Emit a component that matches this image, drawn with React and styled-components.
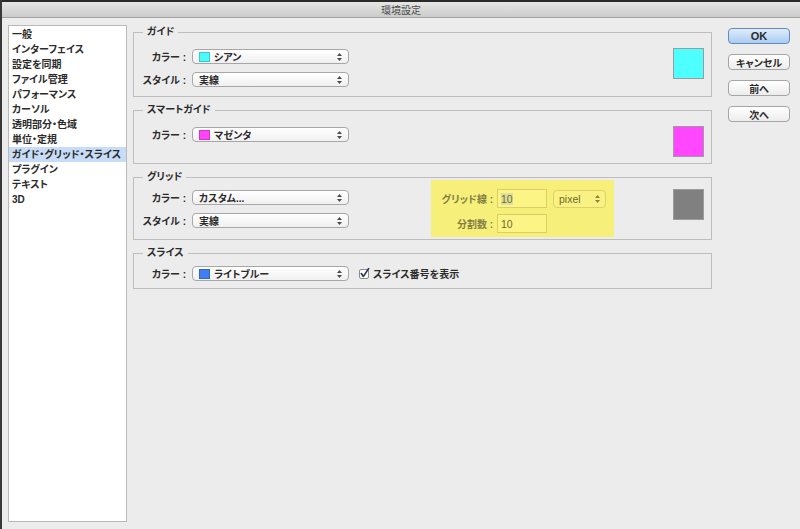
import React from "react";
import styled, { createGlobalStyle, css } from "styled-components";

const FONT = `"Liberation Sans", "Noto Sans CJK JP", sans-serif`;

const GlobalStyle = createGlobalStyle`
  html, body { margin: 0; padding: 0; background: #ececec; }
  body {
    font-family: ${FONT};
    font-size: 10px;
    color: #222;
    font-feature-settings: "palt";
  }
  * { box-sizing: border-box; }
`;

const Window = styled.div`
  width: 800px;
  height: 529px;
  border-left: 2px solid #383838;
  display: flex;
  flex-direction: column;
  overflow: hidden;
  background: #ececec;
`;

const TitleBar = styled.div`
  height: 18px;
  border-top: 2px solid #2a2a2a;
  border-bottom: 1px solid #a2a2a2;
  background: linear-gradient(#e6e6e6, #cbcbcb);
  display: flex;
  align-items: center;
  justify-content: center;
  font-size: 10px;
  color: #4b4b4b;
`;

const Body = styled.div`
  display: flex;
  align-items: flex-start;
  padding: 7px 0 0 6px;
`;

const Sidebar = styled.ul`
  list-style: none;
  margin: 0;
  padding: 1px 0 0;
  width: 119px;
  height: 497px;
  background: #fff;
  border: 1px solid #b9b9b9;
`;

const SideItem = styled.li`
  height: 15px;
  line-height: 15px;
  padding-left: 3px;
  font-weight: 700;
  color: #2b2b2b;
  white-space: nowrap;
  background: ${(p) => (p.$selected ? "#c6dcf7" : "transparent")};
`;

const Main = styled.div`
  margin-left: 6px;
  width: 579px;
  padding-top: 1px;
  display: flex;
  flex-direction: column;
  gap: 7px;
`;

const Group = styled.fieldset`
  margin: 0;
  min-width: 0;
  border: 1px solid #bdbdbd;
  padding: ${(p) => p.$pt}px 7px ${(p) => p.$pb}px 0;
`;

const Legend = styled.legend`
  font-size: 10px;
  line-height: 12px;
  padding: 0 4px;
  margin-left: 9px;
  font-weight: 700;
  color: #2b2b2b;
`;

const GroupContent = styled.div`
  display: flex;
  align-items: flex-start;
`;

const Rows = styled.div`
  display: flex;
  flex-direction: column;
  gap: 6px;
  margin-top: ${(p) => p.$mt || 0}px;
`;

const Row = styled.div`
  display: flex;
  align-items: center;
  height: 17px;
`;

const Label = styled.span`
  width: 52px;
  margin-right: 6px;
  text-align: right;
  white-space: nowrap;
  font-weight: 700;
  color: #2b2b2b;
`;

const SelectBox = styled.div`
  width: ${(p) => p.$w || 157}px;
  height: 15px;
  border: 1px solid #a7a7a7;
  border-radius: 4px;
  background: linear-gradient(#ffffff, #f0f0f0);
  display: flex;
  align-items: center;
  padding: 0 6px;
  font-weight: 700;
  color: #2b2b2b;
  white-space: nowrap;
`;

const SelectText = styled.span`
  flex: 1;
`;

const Chip = styled.span`
  width: 11px;
  height: 10px;
  margin-right: 4px;
  background: ${(p) => p.$color};
  border: 1px solid rgba(0, 0, 0, 0.2);
`;

const Swatch = styled.div`
  width: 31px;
  height: 31px;
  margin-left: auto;
  margin-top: ${(p) => p.$mt || 0}px;
  background: ${(p) => p.$color};
  border: 1px solid #9c9c9c;
`;

const Highlight = styled.div`
  margin-left: 82px;
  margin-top: -3px;
  background: #f6ef7a;
  padding: 9px 8px 4px 0;
  display: flex;
  flex-direction: column;
  gap: 6px;
`;

const HRow = styled.div`
  display: flex;
  align-items: center;
  height: 19px;
`;

const HLabel = styled.span`
  width: 62px;
  margin-right: 4px;
  text-align: right;
  color: #847f44;
  font-weight: 700;
  white-space: nowrap;
`;

const NumInput = styled.div`
  width: 50px;
  height: 19px;
  border: 1px solid #d8cf66;
  background: #fcf585;
  display: flex;
  align-items: center;
  padding-left: 3px;
  color: #6f6a2e;
  font-size: 10.5px;
`;

const Sel = styled.span`
  background: ${(p) => (p.$on ? "#dbe09c" : "transparent")};
`;

const UnitSelect = styled.div`
  width: 53px;
  height: 18px;
  margin-left: 6px;
  border: 1px solid #dcd26a;
  border-radius: 4px;
  background: #f9f282;
  display: flex;
  align-items: center;
  padding: 0 5px;
  color: #6f6a2e;
  font-size: 10.5px;
`;

const CheckLabel = styled.label`
  display: flex;
  align-items: center;
  margin-left: 10px;
  font-weight: 700;
  color: #2b2b2b;
  white-space: nowrap;
  gap: 3px;
`;

const ButtonCol = styled.div`
  margin-left: 16px;
  margin-top: 3px;
  width: 62px;
  display: flex;
  flex-direction: column;
  gap: 10px;
`;

const Button = styled.div`
  height: 16px;
  border: 1px solid #a5a5a5;
  border-radius: 4px;
  background: linear-gradient(#ffffff, #ececec);
  display: flex;
  align-items: center;
  justify-content: center;
  font-size: 10px;
  font-weight: 700;
  color: #2b2b2b;
  ${(p) =>
    p.$primary &&
    css`
      border-color: #6489c0;
      background: linear-gradient(#dfecfb, #a9ccf2);
      font-size: 11px;
    `}
`;

const Arrows = ({ color = "#4a4a4a" }) => (
  <svg width="5" height="8" viewBox="0 0 5 8">
    <path d="M0 3 L2.5 0 L5 3Z" fill={color} />
    <path d="M0 5 L2.5 8 L5 5Z" fill={color} />
  </svg>
);

const Checkbox = () => (
  <svg width="11" height="11" viewBox="0 0 11 11">
    <rect x="0.5" y="1.5" width="9" height="9" rx="1.5" fill="#fff" stroke="#8c8c8c" />
    <path d="M2.3 5.6 L4.4 8.4 L9.6 0.6" fill="none" stroke="#27365a" strokeWidth="1.7" strokeLinecap="round" strokeLinejoin="round" />
  </svg>
);

const Select = ({ chip, children, w }) => (
  <SelectBox $w={w}>
    {chip && <Chip $color={chip} />}
    <SelectText>{children}</SelectText>
    <Arrows />
  </SelectBox>
);

const sideItems = [
  "一般",
  "インターフェイス",
  "設定を同期",
  "ファイル管理",
  "パフォーマンス",
  "カーソル",
  "透明部分・色域",
  "単位・定規",
  "ガイド・グリッド・スライス",
  "プラグイン",
  "テキスト",
  "3D",
];

export default function App() {
  return (
    <>
      <GlobalStyle />
      <Window>
        <TitleBar>環境設定</TitleBar>
        <Body>
          <Sidebar>
            {sideItems.map((t, i) => (
              <SideItem key={t} $selected={i === 8}>
                {t}
              </SideItem>
            ))}
          </Sidebar>

          <Main>
            <Group $pt={10} $pb={8}>
              <Legend>ガイド</Legend>
              <GroupContent>
                <Rows>
                  <Row>
                    <Label>カラー :</Label>
                    <Select chip="#4dfbff">シアン</Select>
                  </Row>
                  <Row>
                    <Label>スタイル :</Label>
                    <Select>実線</Select>
                  </Row>
                </Rows>
                <Swatch $color="#4dffff" />
              </GroupContent>
            </Group>

            <Group $pt={10} $pb={6}>
              <Legend>スマートガイド</Legend>
              <GroupContent>
                <Rows>
                  <Row>
                    <Label>カラー :</Label>
                    <Select chip="#ff45f7">マゼンタ</Select>
                  </Row>
                </Rows>
                <Swatch $color="#ff47ff" />
              </GroupContent>
            </Group>

            <Group $pt={0} $pb={2}>
              <Legend>グリッド</Legend>
              <GroupContent>
                <Rows $mt={6}>
                  <Row>
                    <Label>カラー :</Label>
                    <Select>カスタム...</Select>
                  </Row>
                  <Row>
                    <Label>スタイル :</Label>
                    <Select>実線</Select>
                  </Row>
                </Rows>
                <Highlight>
                  <HRow>
                    <HLabel>グリッド線 :</HLabel>
                    <NumInput>
                      <Sel $on>10</Sel>
                    </NumInput>
                    <UnitSelect>
                      <SelectText>pixel</SelectText>
                      <Arrows color="#8a8440" />
                    </UnitSelect>
                  </HRow>
                  <HRow>
                    <HLabel>分割数 :</HLabel>
                    <NumInput>
                      <Sel>10</Sel>
                    </NumInput>
                  </HRow>
                </Highlight>
                <Swatch $color="#808080" $mt={6} />
              </GroupContent>
            </Group>

            <Group $pt={6} $pb={6}>
              <Legend>スライス</Legend>
              <GroupContent>
                <Rows>
                  <Row>
                    <Label>カラー :</Label>
                    <Select chip="#3f7ef2">ライトブルー</Select>
                    <CheckLabel>
                      <Checkbox />
                      スライス番号を表示
                    </CheckLabel>
                  </Row>
                </Rows>
              </GroupContent>
            </Group>
          </Main>

          <ButtonCol>
            <Button $primary>OK</Button>
            <Button>キャンセル</Button>
            <Button>前へ</Button>
            <Button>次へ</Button>
          </ButtonCol>
        </Body>
      </Window>
    </>
  );
}
